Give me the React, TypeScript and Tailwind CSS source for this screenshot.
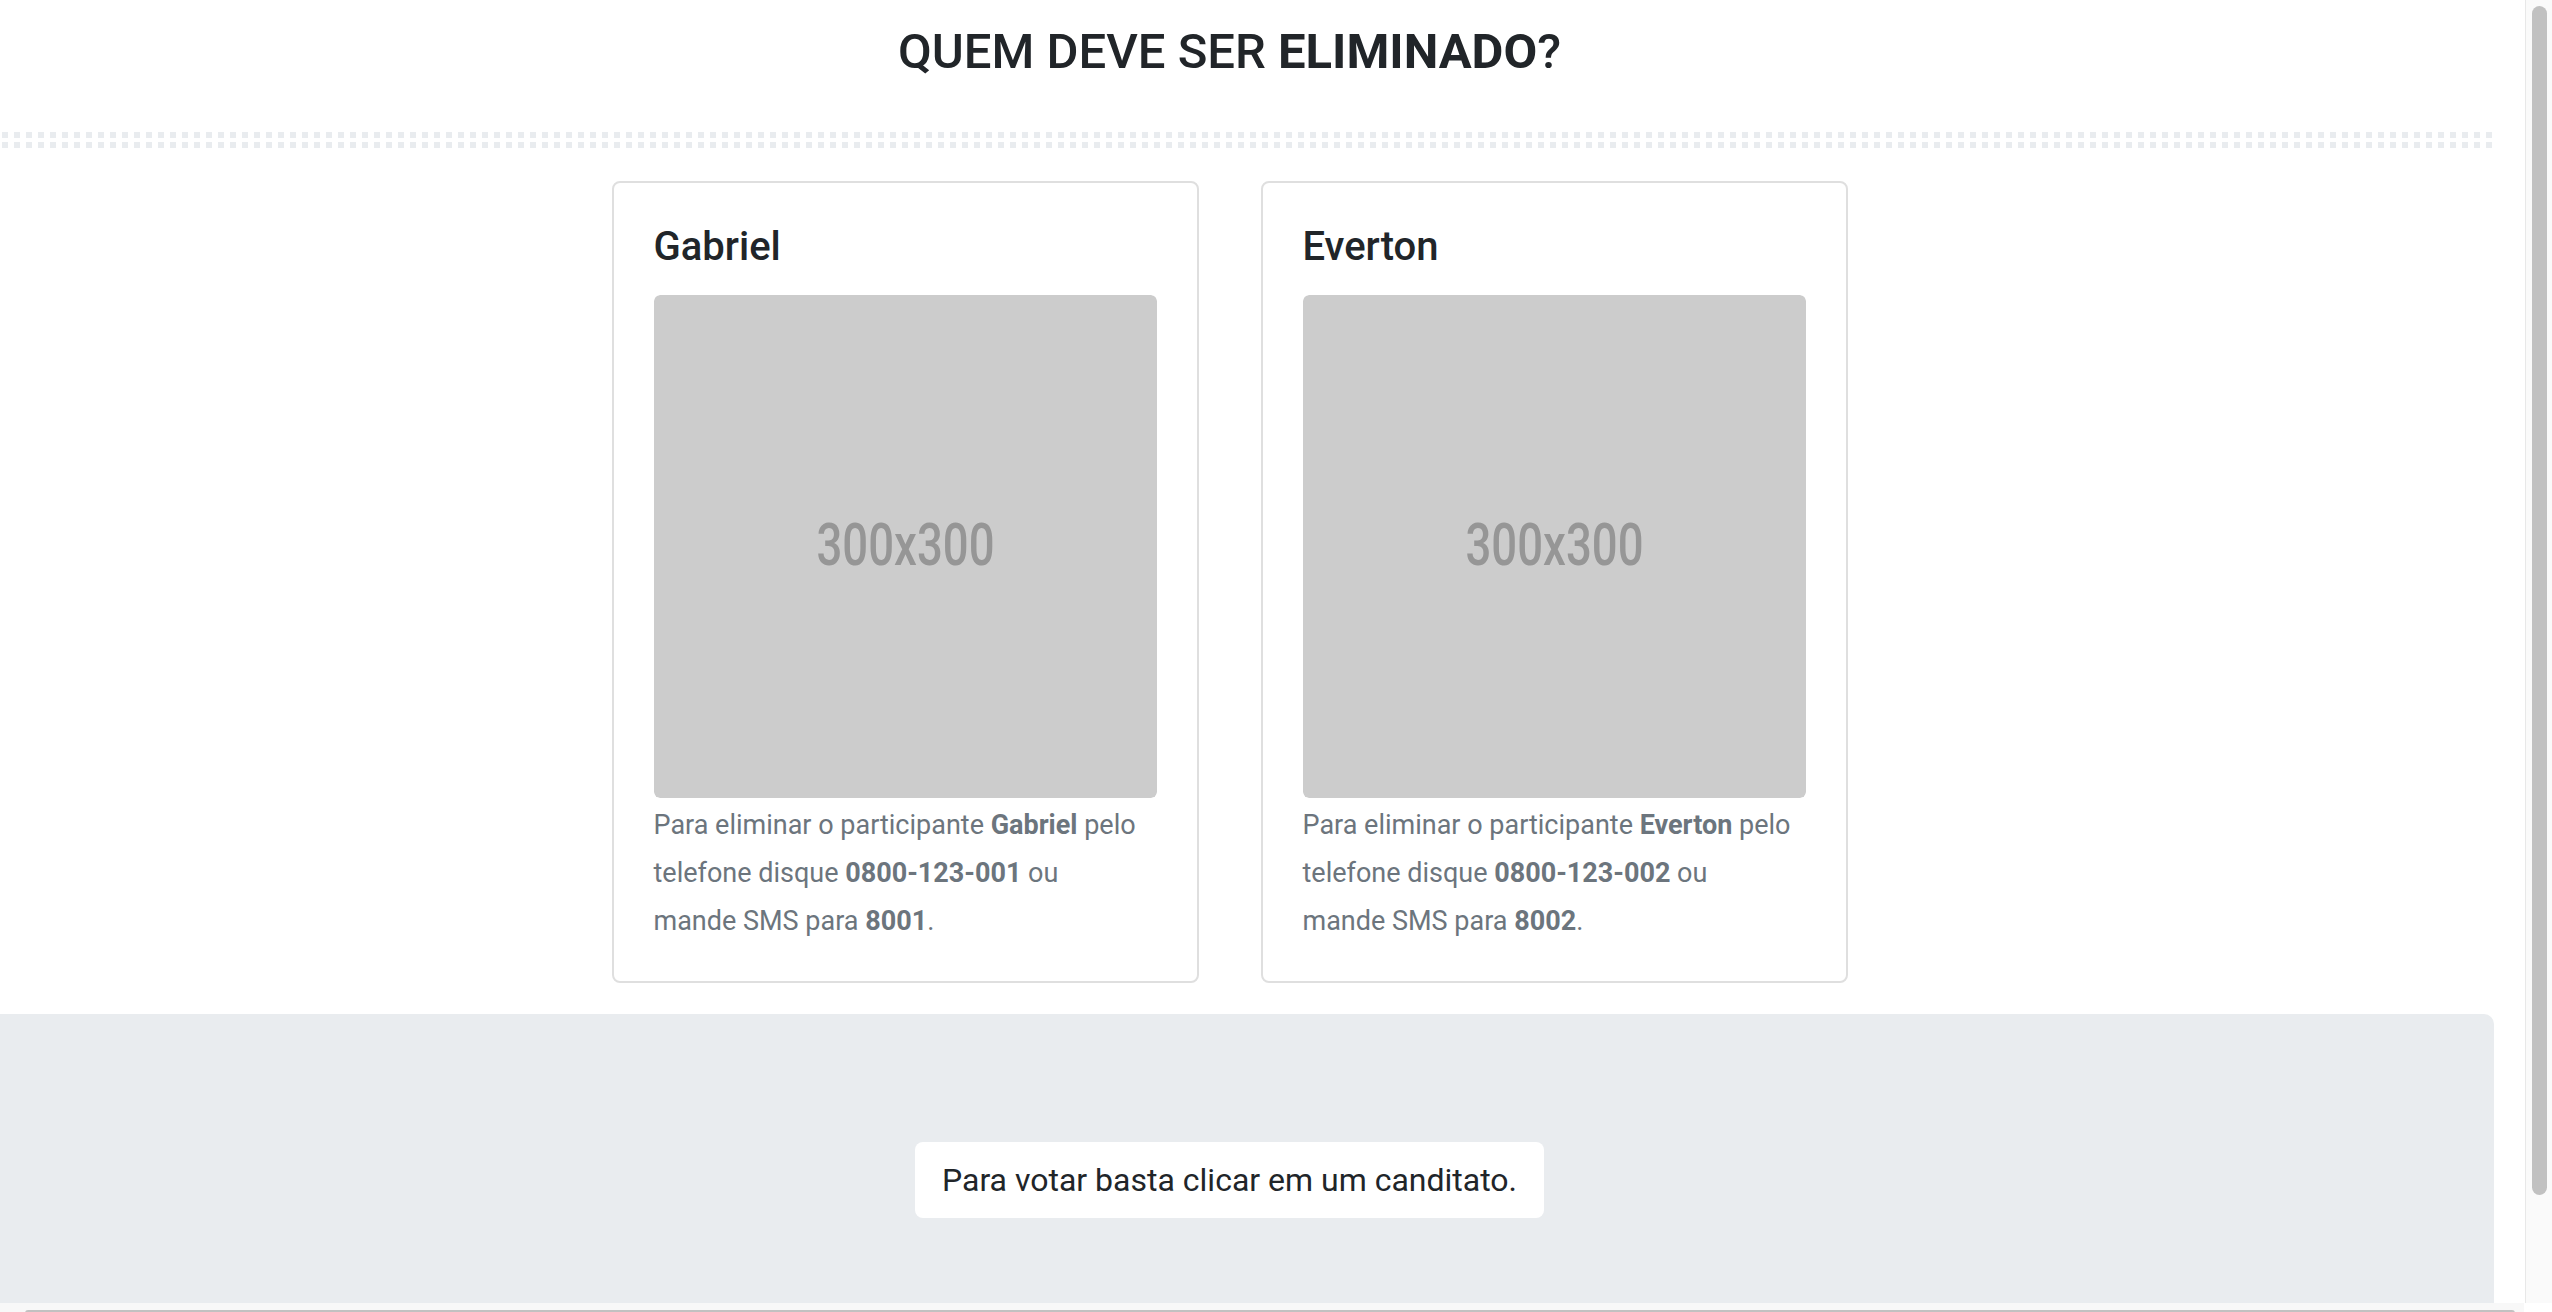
import React from "react";

function Placeholder() {
  return (
    <svg
      viewBox="0 0 503 503"
      className="block w-[503px] h-[503px] rounded-[6px]"
      xmlns="http://www.w3.org/2000/svg"
    >
      <rect width="503" height="503" rx="6" fill="#cccccc" />
      <text
        x="251.5"
        y="270"
        textAnchor="middle"
        fontFamily="Roboto, 'Liberation Sans', sans-serif"
        fontWeight="500"
        fontSize="60"
        textLength="178"
        lengthAdjust="spacingAndGlyphs"
        fill="#969696"
      >
        300x300
      </text>
    </svg>
  );
}

function Card({ name, phone, sms }: { name: string; phone: string; sms: string }) {
  return (
    <div className="w-[587px] border-2 border-[#dfdfdf] rounded-[8px] bg-white px-[40px] pt-[40px] pb-[36px]">
      <h5 className="text-[40px] leading-[48px] font-medium text-[#212529] mb-[24px]">{name}</h5>
      <Placeholder />
      <p className="mt-[3px] text-[27px] leading-[48px] text-[#6c757d] whitespace-nowrap">
        Para eliminar o participante <strong className="font-bold">{name}</strong> pelo
        <br />
        telefone disque <strong className="font-bold">{phone}</strong> ou
        <br />
        mande SMS para <strong className="font-bold">{sms}</strong>.
      </p>
    </div>
  );
}

export default function App() {
  return (
    <div className="w-[2552px] h-[1312px] flex flex-col bg-white overflow-hidden font-[Roboto,Arial,sans-serif]">
      <div className="flex flex-1 min-h-0">
        <main className="w-[2525px] flex flex-col">
          <div className="w-[2459px] flex justify-center pt-[24px]">
            <h1 className="text-[49px] leading-[56px] font-medium text-[#212529]">
              QUEM DEVE SER <strong className="font-bold">ELIMINADO</strong>?
            </h1>
          </div>
          <div className="w-[2494px] mt-[52px] pl-[2px] flex flex-col gap-[4px]">
            <div className="h-[6px] bg-[linear-gradient(90deg,#e9ecef_6px,transparent_6px)] bg-size-[12px_6px]" />
            <div className="h-[6px] bg-[linear-gradient(90deg,#e9ecef_6px,transparent_6px)] bg-size-[12px_6px]" />
          </div>
          <div className="w-[2459px] flex justify-center gap-[62px] mt-[33px]">
            <Card name="Gabriel" phone="0800-123-001" sms="8001" />
            <Card name="Everton" phone="0800-123-002" sms="8002" />
          </div>
          <div className="w-[2494px] flex-1 mt-[31px] bg-[#e9ecef] rounded-tr-[10px] pt-[128px]">
            <div className="w-[2459px] flex justify-center">
              <div className="bg-white rounded-[8px] px-[27px] text-[32px] leading-[76px] text-[#212529]">
                Para votar basta clicar em um canditato.
              </div>
            </div>
          </div>
        </main>
        <div className="w-[27px] bg-[#fafafa] border-l border-[#e8e8e8] pl-[6px] pt-[6px]">
          <div className="w-[15px] h-[1189px] rounded-full bg-[#c1c1c1]" />
        </div>
      </div>
      <div className="h-[9px] flex">
        <div className="w-[2524px] bg-[#f8f8f8] pt-[7px] pl-[25px]">
          <div className="w-[2490px] h-[6px] rounded-full bg-[#c1c1c1]" />
        </div>
        <div className="flex-1 bg-white" />
      </div>
    </div>
  );
}
